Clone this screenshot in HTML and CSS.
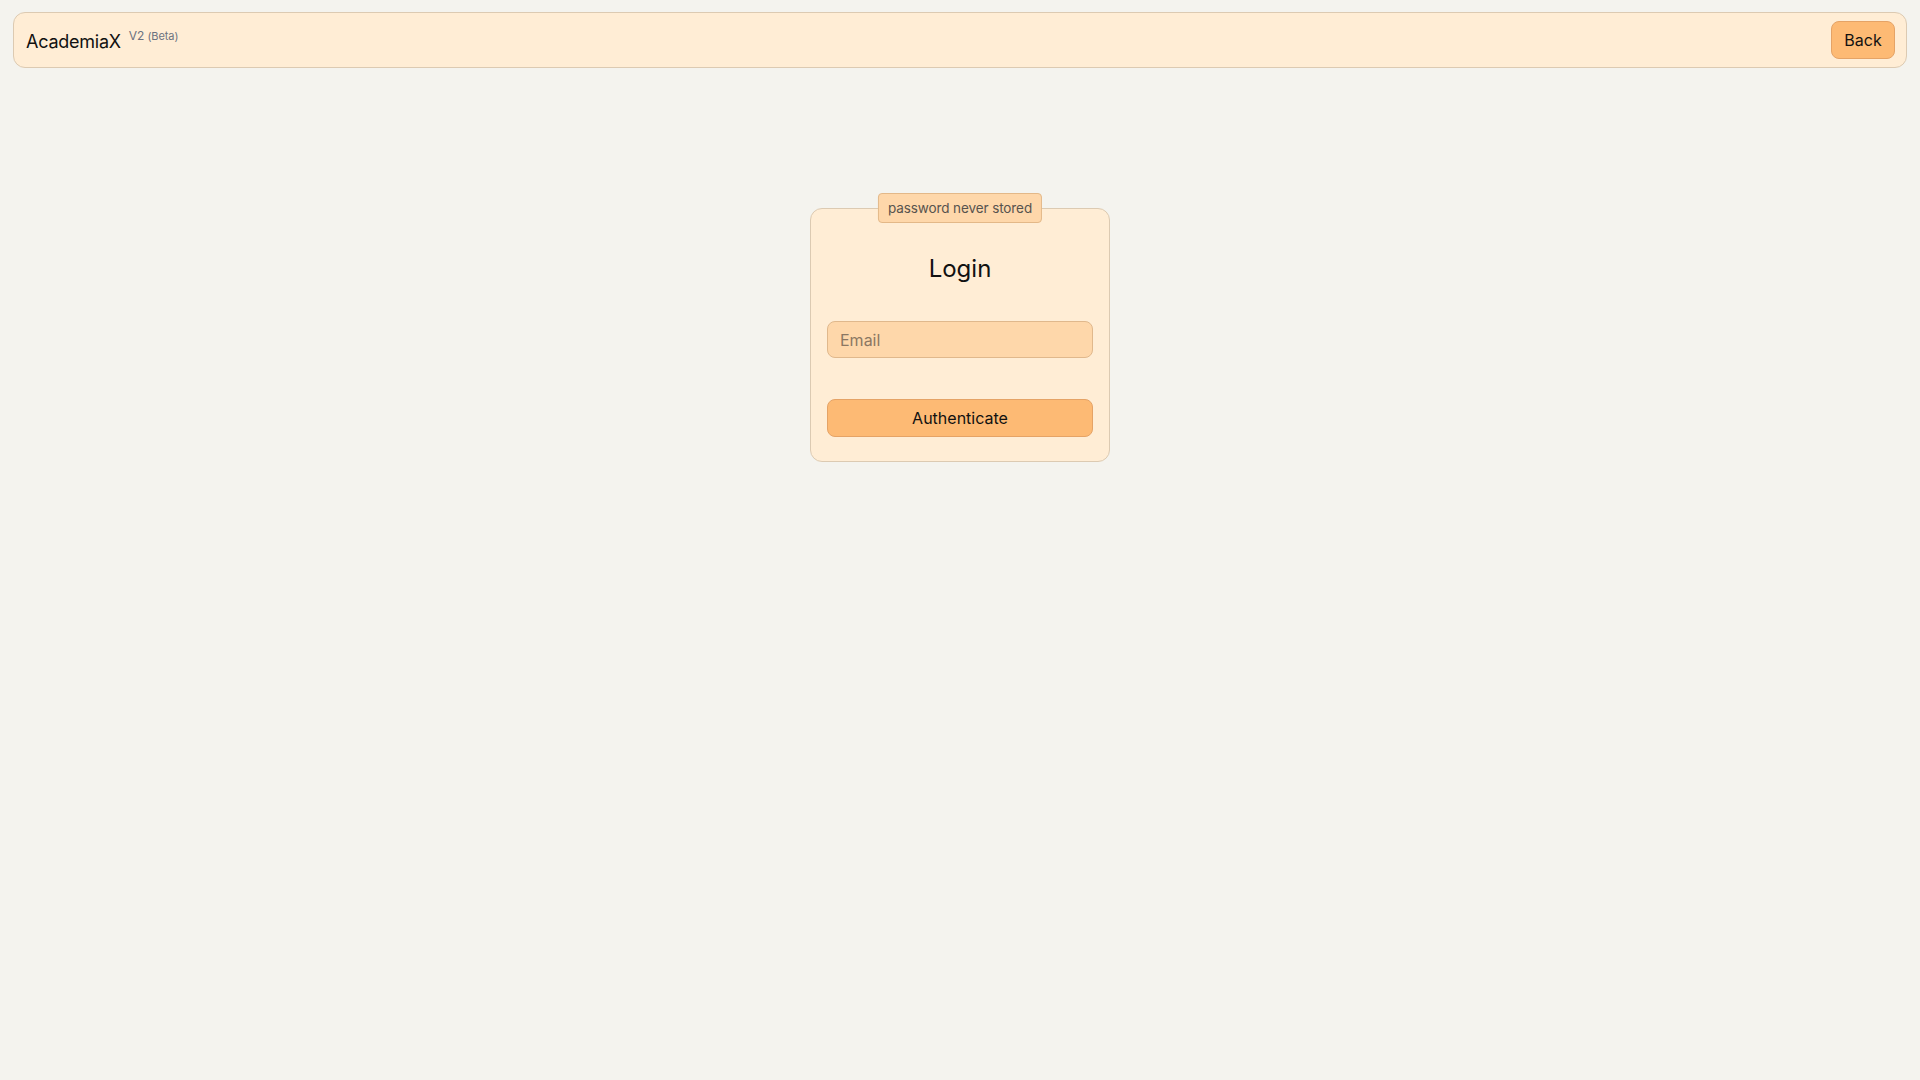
FILE: index.html
```html
<!DOCTYPE html>
<html lang="en">
<head>
  <meta charset="UTF-8">
  <meta name="viewport" content="width=device-width, initial-scale=1.0">
  <title>AcademiaX - Login</title>
  <link rel="stylesheet" href="styles.css">
</head>
<body>
  <header class="topbar">
    <div class="brand">
      <span class="brand-name">AcademiaX</span>
      <span class="brand-version">V2 <small>(Beta)</small></span>
    </div>
    <button class="back-btn" type="button">Back</button>
  </header>

  <main class="page">
    <form class="login-card" id="login-form">
      <div class="badge">password never stored</div>
      <h2 class="login-title">Login</h2>
      <input class="login-input" type="email" id="email" placeholder="Email">
      <button class="login-btn" type="submit">Authenticate</button>
    </form>
  </main>
</body>
</html>
```

FILE: styles.css
```css
/* Global */
body {
  margin: 0;
  padding: 12px 13px;
  background: #f4f3ee;
  color: #111;
  font-family: Inter, 'Noto Sans', sans-serif;
  min-height: 100vh;
  box-sizing: border-box;
}

button,
input {
  font-family: inherit;
}

/* Header */
.topbar {
  display: flex;
  justify-content: space-between;
  align-items: center;
  height: 56px;
  box-sizing: border-box;
  padding: 0 11px 0 12px;
  background: #ffedd5;
  border: 1px solid #dccab2;
  border-radius: 12px;
}
.brand {
  display: flex;
  align-items: flex-start;
  gap: 8px;
}
.brand-name {
  font-size: 18px;
  line-height: 24px;
  padding-top: 3px;
  letter-spacing: -0.25px;
}
.brand-version {
  font-size: 12px;
  color: #6b7280;
  line-height: 16px;
  padding-top: 1px;
  letter-spacing: -0.1px;
}
.brand-version small {
  font-size: 11px;
}
.back-btn {
  width: 64px;
  height: 38px;
  padding: 0;
  font-size: 16px;
  color: #111;
  background: #fdba74;
  border: 1px solid #e5a366;
  border-radius: 8px;
  cursor: pointer;
}

/* Login */
.page {
  display: flex;
  justify-content: center;
  padding-top: 140px;
}
.login-card {
  position: relative;
  display: flex;
  flex-direction: column;
  width: 300px;
  box-sizing: border-box;
  padding: 44px 16px 24px;
  background: #ffedd5;
  border: 1px solid #dccab2;
  border-radius: 12px;
}
.badge {
  position: absolute;
  top: -16px;
  left: 50%;
  transform: translateX(-50%);
  height: 30px;
  box-sizing: border-box;
  padding: 0 9px;
  line-height: 28px;
  font-size: 13.5px;
  letter-spacing: -0.1px;
  color: #57534e;
  white-space: nowrap;
  background: #fed7aa;
  border: 1px solid #e3b888;
  border-radius: 4px;
}
.login-title {
  margin: 0 0 36px;
  text-align: center;
  font-size: 24px;
  font-weight: 400;
  line-height: 32px;
}
.login-input {
  height: 37px;
  box-sizing: border-box;
  padding: 0 12px;
  font-size: 16px;
  color: #111;
  background: #fed7aa;
  border: 1px solid #e0b88c;
  border-radius: 8px;
  outline: none;
  margin-bottom: 41px;
}
.login-input::placeholder {
  color: #8b7763;
}
.login-btn {
  height: 38px;
  font-size: 16px;
  color: #111;
  background: #fdba74;
  border: 1px solid #e5a366;
  border-radius: 8px;
  cursor: pointer;
}
```
